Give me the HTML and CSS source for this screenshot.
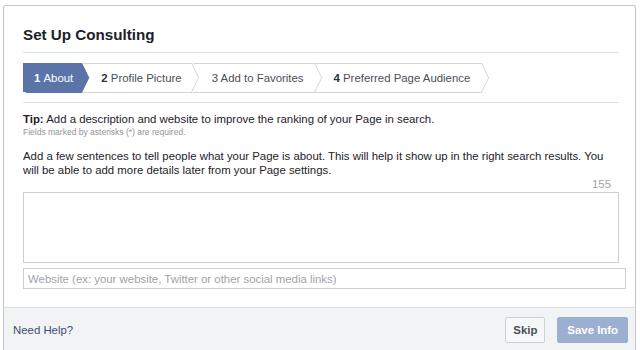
FILE: index.html
```
<!DOCTYPE html>
<html lang="en">
<head>
<meta charset="UTF-8">
<meta name="viewport" content="width=device-width, initial-scale=1.0">
<title>Set Up Consulting</title>
<link rel="stylesheet" href="styles.css">
</head>
<body>

<div class="dialog">
    <div class="dialog-body">
        <h2 class="dialog-title">Set Up Consulting</h2>

        <div class="steps-row">
            <ol class="steps">
                <li class="step active"><b>1</b>&nbsp;About</li>
                <li class="step"><b>2</b>&nbsp;Profile Picture</li>
                <li class="step">3 Add to Favorites</li>
                <li class="step"><b>4</b>&nbsp;Preferred Page Audience</li>
            </ol>
        </div>

        <p class="tip"><b>Tip:</b> Add a description and website to improve the ranking of your Page in search.</p>
        <p class="required">Fields marked by asterisks (*) are required.</p>
        <p class="about-help">Add a few sentences to tell people what your Page is about. This will help it show up in the right search results. You will be able to add more details later from your Page settings.</p>
        <div class="counter">155</div>
        <textarea class="about-input"></textarea>
        <input type="text" class="website-input" placeholder="Website (ex: your website, Twitter or other social media links)">
    </div>

    <div class="dialog-footer">
        <a href="#" class="help-link">Need Help?</a>
        <div class="actions">
            <button class="btn btn-skip">Skip</button>
            <button class="btn btn-save" disabled>Save Info</button>
        </div>
    </div>
</div>

</body>
</html>
```

FILE: styles.css
```
body {
    margin: 0;
    background-color: #fff;
    color: #1d2129;
    font-family: "Liberation Sans", Arial, sans-serif;
    font-size: 11.4px;
}

.dialog {
    margin: 5px 4px 0 3px;
    border: 1px solid #c4c6ca;
    border-bottom: none;
    border-radius: 3px 3px 0 0;
}

.dialog-body {
    padding: 0 16px 18px 19px;
}

.dialog-title {
    margin: 0;
    padding: 20px 0 8px;
    font-size: 15.2px;
    line-height: 18px;
    font-weight: bold;
    border-bottom: 1px solid #dddfe2;
}

/* wizard steps */
.steps-row {
    padding: 10px 0;
    border-bottom: 1px solid #dddfe2;
}

.steps {
    display: flex;
    list-style: none;
    margin: 0;
    padding: 0;
    height: 29px;
}

.step {
    position: relative;
    z-index: 0;
    display: flex;
    align-items: center;
    padding: 0 18px 0 12px;
    color: #4b4f56;
    white-space: nowrap;
}

.step b {
    color: #29324a;
}

.step::before,
.step::after {
    content: "";
    position: absolute;
    left: 0;
    right: 0;
    height: 50%;
    box-sizing: border-box;
    border-right: 1px solid #d3d6db;
    z-index: -1;
}

.step::before {
    top: 0;
    border-top: 1px solid #d3d6db;
    transform-origin: bottom;
    transform: skewX(26deg);
}

.step::after {
    bottom: 0;
    border-bottom: 1px solid #d3d6db;
    transform-origin: top;
    transform: skewX(-26deg);
}

.step.active {
    padding-left: 11px;
    padding-right: 16px;
    color: #fff;
    background: linear-gradient(#5b74a8, #5b74a8) no-repeat left / 20px 100%;
}

.step.active b {
    color: #fff;
}

.step.active::before,
.step.active::after {
    left: 10px;
    background-color: #5b74a8;
    border-color: #5b74a8;
}

/* form */
.tip {
    margin: 8px 0 0;
    line-height: 16px;
}

.required {
    margin: 0;
    font-size: 8.5px;
    line-height: 11px;
    color: #90949c;
}

.about-help {
    margin: 11px 0 0;
    line-height: 14px;
    color: #1d2129;
}

.counter {
    padding-right: 8px;
    text-align: right;
    line-height: 14px;
    color: #a0a3a9;
}

.about-input {
    display: block;
    width: 100%;
    height: 71px;
    margin: 1px 0 0;
    box-sizing: border-box;
    border: 1px solid #ccd0d5;
    resize: none;
}

.website-input {
    display: block;
    width: calc(100% + 7px);
    height: 21px;
    margin: 5px 0 0;
    padding: 0 4px;
    box-sizing: border-box;
    border: 1px solid #ccd0d5;
    font-family: inherit;
    font-size: 11.4px;
}

.website-input::placeholder {
    color: #a0a3a9;
}

/* footer */
.dialog-footer {
    display: flex;
    justify-content: space-between;
    align-items: center;
    padding: 9px 7px 10px 9px;
    background-color: #f2f3f5;
    border-top: 1px solid #dddfe2;
}

.help-link {
    color: #3b4f72;
    text-decoration: none;
}

.actions {
    display: flex;
    gap: 12px;
}

.btn {
    height: 26px;
    padding: 0 7px;
    border: 1px solid #ced0d4;
    border-radius: 2px;
    font-family: inherit;
    font-size: 11.4px;
    font-weight: bold;
}

.btn-skip {
    background-color: #f6f7f9;
    color: #4b4f56;
}

.btn-save {
    padding: 0 9px;
    background-color: #9dafd0;
    border-color: #9dafd0;
    color: #fff;
}
```
